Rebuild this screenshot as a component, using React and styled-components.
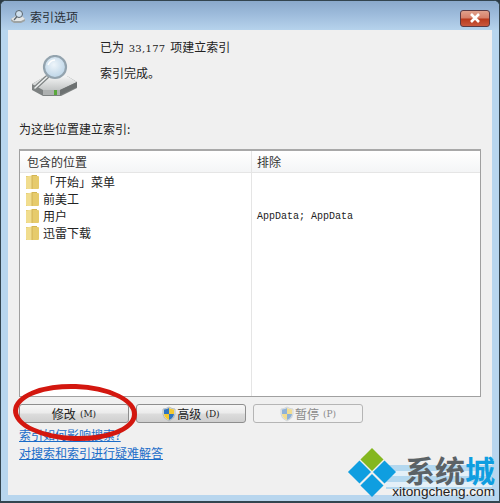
import styled, { createGlobalStyle } from "styled-components";

const GlobalStyle = createGlobalStyle`
  html, body {
    margin: 0;
    padding: 0;
    background: #2b3a44;
  }
  * {
    box-sizing: border-box;
  }
`;

const folders = ["「开始」菜单", "前美工", "用户", "迅雷下载"];

function DriveIcon() {
  return (
    <svg width="48" height="42" viewBox="0 0 48 42">
      <defs>
        <linearGradient id="driveTop" x1="0" y1="0" x2="0" y2="1">
          <stop offset="0" stopColor="#f4f5f5" />
          <stop offset="1" stopColor="#c3c6c6" />
        </linearGradient>
        <radialGradient id="lens" cx="0.45" cy="0.4" r="0.7">
          <stop offset="0" stopColor="#eef5fa" />
          <stop offset="1" stopColor="#b4cfe4" />
        </radialGradient>
      </defs>
      <path d="M1 29 L15 21 H36 L46 27 V33 L30 41 H12 L1 35 Z" fill="#7d8181" />
      <path d="M1 29 L15 21 H36 L46 27 L29 35 H12 Z" fill="url(#driveTop)" />
      <path d="M12 35 H29 V40 H12 Z" fill="#aeb1b1" />
      <path d="M29 35 L46 27 V32 L29 40 Z" fill="#6d7171" />
      <rect x="23" y="35" width="3" height="5" fill="#5aa83c" />
      <path d="M4 33 L16 22" stroke="#7f8484" strokeWidth="4" strokeLinecap="round" />
      <path d="M4 33 L16 22" stroke="#eceeee" strokeWidth="1.6" strokeLinecap="round" />
      <circle cx="24" cy="12" r="11" fill="url(#lens)" stroke="#93a3ae" strokeWidth="2.2" />
      <path d="M17 10 A8 8 0 0 1 24 5" fill="none" stroke="#fff" strokeWidth="1.5" />
    </svg>
  );
}

function TitleIcon() {
  return (
    <svg width="16" height="16" viewBox="0 0 16 16">
      <path d="M1 10 L6 7 H12 L15 10 V12 L11 14 H4 L1 12 Z" fill="#9ea3a3" />
      <path d="M1 10 L6 7 H12 L15 10 L11 12 H4 Z" fill="#e4e6e6" />
      <circle cx="9" cy="5" r="3.5" fill="#cfe0ee" stroke="#59656e" strokeWidth="1" />
      <path d="M4 11 L7 7.5" stroke="#59656e" strokeWidth="1.2" />
    </svg>
  );
}

function FolderIcon() {
  return (
    <svg width="13" height="16" viewBox="0 0 13 16">
      <path d="M0 2 H5 L6 1 H11 V14 L0 15 Z" fill="#d3b552" />
      <path d="M0 2.5 L6 1.5 V15 H1 Q0 15 0 14 Z" fill="#f1dd8e" />
      <path d="M6 2 H12 Q13 2 13 3 V14 Q13 15 12 15 H6 Z" fill="#e6cb6c" />
      <path d="M6 2 V15" stroke="#c4a448" strokeWidth="0.7" />
    </svg>
  );
}

function ShieldIcon({ muted }) {
  return (
    <svg width="14" height="16" viewBox="0 0 14 16" opacity={muted ? 0.5 : 1}>
      <path d="M7 1 Q10 3 13 3 V8 Q13 12.5 7 15 Q1 12.5 1 8 V3 Q4 3 7 1 Z" fill="#e9e9e0" stroke="#8d9aa6" strokeWidth="0.6" />
      <path d="M7 2 V8 H2 V3.6 Q5 3.4 7 2 Z" fill="#2f74c0" />
      <path d="M7 2 Q9 3.4 12 3.6 V8 H7 Z" fill="#f3c930" />
      <path d="M2 8 H7 V14 Q2.4 12 2 8 Z" fill="#f3c930" />
      <path d="M7 8 H12 Q11.6 12 7 14 Z" fill="#2f74c0" />
    </svg>
  );
}

function LogoMark() {
  return (
    <svg width="50" height="50" viewBox="0 0 52 52">
      <path d="M26 0 L38 12 L26 24 L14 12 Z" fill="#84b71f" />
      <path d="M13 13 L25 25 L13 37 L1 25 Z" fill="#0f9ee0" />
      <path d="M39 13 L51 25 L39 37 L27 25 Z" fill="#0f9ee0" />
      <path d="M26 27 L38 39 L26 51 L14 39 Z" fill="#0f9ee0" />
    </svg>
  );
}

export default function App() {
  return (
    <>
      <GlobalStyle />
      <Frame>
        <TitleBar>
          <TitleIcon />
          <Title>索引选项</Title>
          <CloseButton>
            <svg width="12" height="10" viewBox="0 0 12 10">
              <path d="M2 1 L10 9 M10 1 L2 9" stroke="#fff" strokeWidth="2.6" />
            </svg>
          </CloseButton>
        </TitleBar>
        <Client>
          <Summary>
            <DriveIcon />
            <SummaryText>
              <Line>
                已为 <Count>33,177</Count> 项建立索引
              </Line>
              <Line>索引完成。</Line>
            </SummaryText>
          </Summary>
          <Caption>为这些位置建立索引:</Caption>
          <Table>
            <HeaderRow>
              <HeaderCell>包含的位置</HeaderCell>
              <HeaderCell>排除</HeaderCell>
            </HeaderRow>
            <Body>
              <Column>
                {folders.map((name) => (
                  <FolderRow key={name}>
                    <FolderIcon />
                    <span>{name}</span>
                  </FolderRow>
                ))}
              </Column>
              <ExcludeColumn>
                <ExcludeText>AppData; AppData</ExcludeText>
              </ExcludeColumn>
            </Body>
          </Table>
          <Buttons>
            <Button>
              修改<Key>(M)</Key>
            </Button>
            <Button>
              <ShieldIcon />
              高级<Key>(D)</Key>
            </Button>
            <Button disabled>
              <ShieldIcon muted />
              暂停<Key>(P)</Key>
            </Button>
          </Buttons>
          <Links>
            <Link>索引如何影响搜索?</Link>
            <Link>对搜索和索引进行疑难解答</Link>
          </Links>
        </Client>
        <Circle />
        <Haze />
        <Watermark>
          <LogoMark />
          <Brand>
            <BrandName>
              系统<BrandAccent>城</BrandAccent>
            </BrandName>
            <BrandUrl>xitongcheng.com</BrandUrl>
          </Brand>
        </Watermark>
      </Frame>
    </>
  );
}

const Frame = styled.div`
  position: relative;
  width: 500px;
  height: 503px;
  overflow: hidden;
  padding: 0 7px 6px;
  display: flex;
  flex-direction: column;
  border: 1px solid #33454f;
  border-bottom-width: 2px;
  border-radius: 6px 6px 0 0;
  background: #b8d6ee;
  font-family: "Noto Sans CJK SC", "Liberation Sans", sans-serif;
  font-size: 12px;
  color: #222;
`;

const TitleBar = styled.div`
  height: 29px;
  flex: none;
  display: flex;
  align-items: center;
  gap: 5px;
  margin: 0 -7px;
  padding: 2px 3px 0 9px;
  background: linear-gradient(180deg, #8aa9cb 0%, #9dbbdb 45%, #b6d3ec 100%);
`;

const Title = styled.div`
  font-size: 12px;
  color: #2a3138;
  margin-left: -1px;
`;

const CloseButton = styled.div`
  margin-left: auto;
  margin-right: 6px;
  margin-top: 3px;
  width: 30px;
  height: 17px;
  display: flex;
  align-items: center;
  justify-content: center;
  border: 1px solid #5a3a44;
  border-radius: 3px;
  background: linear-gradient(180deg, #e0a08c 0%, #d67f68 48%, #b8391c 52%, #c9583e 100%);
`;

const Client = styled.div`
  flex: 1;
  display: flex;
  flex-direction: column;
  padding: 0 11px;
  background: #f0f0f0;
`;

const Summary = styled.div`
  height: 88px;
  flex: none;
  display: flex;
  padding-left: 12px;
  align-items: flex-start;

  svg {
    margin-top: 25px;
    flex: none;
  }
`;

const SummaryText = styled.div`
  display: flex;
  flex-direction: column;
  gap: 9px;
  margin-left: 21px;
  padding-top: 8px;
`;

const Line = styled.div`
  height: 17px;
  line-height: 17px;
  white-space: pre;
`;

const Count = styled.span`
  font-family: "DejaVu Serif", serif;
  font-size: 10px;
  letter-spacing: 0.3px;
  margin: 0 2px;
`;

const Caption = styled.div`
  height: 17px;
  line-height: 17px;
  margin-top: 2px;
  flex: none;
`;

const Table = styled.div`
  margin-top: 12px;
  height: 248px;
  flex: none;
  display: flex;
  flex-direction: column;
  background: #fff;
  border: 1px solid #a0a0a0;
  border-top: 2px solid #a8a8a8;
`;

const HeaderRow = styled.div`
  height: 22px;
  flex: none;
  display: grid;
  grid-template-columns: 231px 1fr;
  border-bottom: 1px solid #e5e5e5;
  background: linear-gradient(180deg, #ffffff 0%, #f4f5f6 100%);
`;

const HeaderCell = styled.div`
  padding-left: 7px;
  line-height: 21px;
  color: #333;

  & + & {
    border-left: 1px solid #e5e5e5;
    padding-left: 5px;
  }
`;

const Body = styled.div`
  flex: 1;
  display: grid;
  grid-template-columns: 231px 1fr;
`;

const Column = styled.div`
  display: flex;
  flex-direction: column;
  padding: 0 0 0 6px;
`;

const ExcludeColumn = styled.div`
  border-left: 1px solid #e5e5e5;
  padding: 35px 0 0 5px;
`;

const ExcludeText = styled.div`
  font-family: "Liberation Mono", monospace;
  font-size: 10px;
  line-height: 17px;
`;

const FolderRow = styled.div`
  height: 17px;
  display: flex;
  align-items: center;
  gap: 4px;
  line-height: 17px;
`;

const Buttons = styled.div`
  margin-top: 7px;
  display: flex;
  gap: 7px;
  flex: none;
`;

const Button = styled.div`
  width: 110px;
  height: 19px;
  display: flex;
  align-items: center;
  justify-content: center;
  gap: 1px;
  border: 1px solid ${(props) => (props.disabled ? "#b5b5b5" : "#8e8e8e")};
  border-radius: 3px;
  color: ${(props) => (props.disabled ? "#8a8a8a" : "#222")};
  background: ${(props) =>
    props.disabled
      ? "#f2f2f2"
      : "linear-gradient(180deg, #f6f6f6 0%, #ebebeb 48%, #dcdcdc 52%, #cfcfcf 100%)"};
`;

const Key = styled.span`
  font-family: "DejaVu Serif", serif;
  font-size: 9px;
  margin-left: 3px;
`;

const Links = styled.div`
  margin-top: 3px;
  display: flex;
  flex-direction: column;
  gap: 1px;
`;

const Link = styled.div`
  height: 17px;
  line-height: 17px;
  color: #1a6cc8;
  text-decoration: underline;
`;

const Circle = styled.div`
  position: absolute;
  left: 12px;
  top: 383px;
  width: 124px;
  height: 57px;
  border: 5px solid #d3170f;
  border-radius: 50%;
  transform: rotate(2deg);
`;

const Haze = styled.div`
  position: absolute;
  left: 385px;
  top: 464px;
  width: 106px;
  height: 24px;
  background: repeating-linear-gradient(180deg, #b4d8ef 0 6px, #e4f0f8 6px 11px);
`;

const Watermark = styled.div`
  position: absolute;
  left: 346px;
  top: 447px;
  display: flex;
`;

const Brand = styled.div`
  display: flex;
  flex-direction: column;
  align-items: flex-end;
  margin-left: -4px;
  padding-top: 6px;
  width: 102px;
`;

const BrandName = styled.div`
  font-size: 30px;
  font-weight: 700;
  line-height: 30px;
  height: 30px;
  overflow: visible;
  color: #5b6266;
  white-space: nowrap;
`;

const BrandAccent = styled.span`
  color: #0f9ee0;
`;

const BrandUrl = styled.div`
  font-family: "Liberation Sans", sans-serif;
  font-size: 13.6px;
  line-height: 15px;
  color: #222;
  white-space: nowrap;
`;
